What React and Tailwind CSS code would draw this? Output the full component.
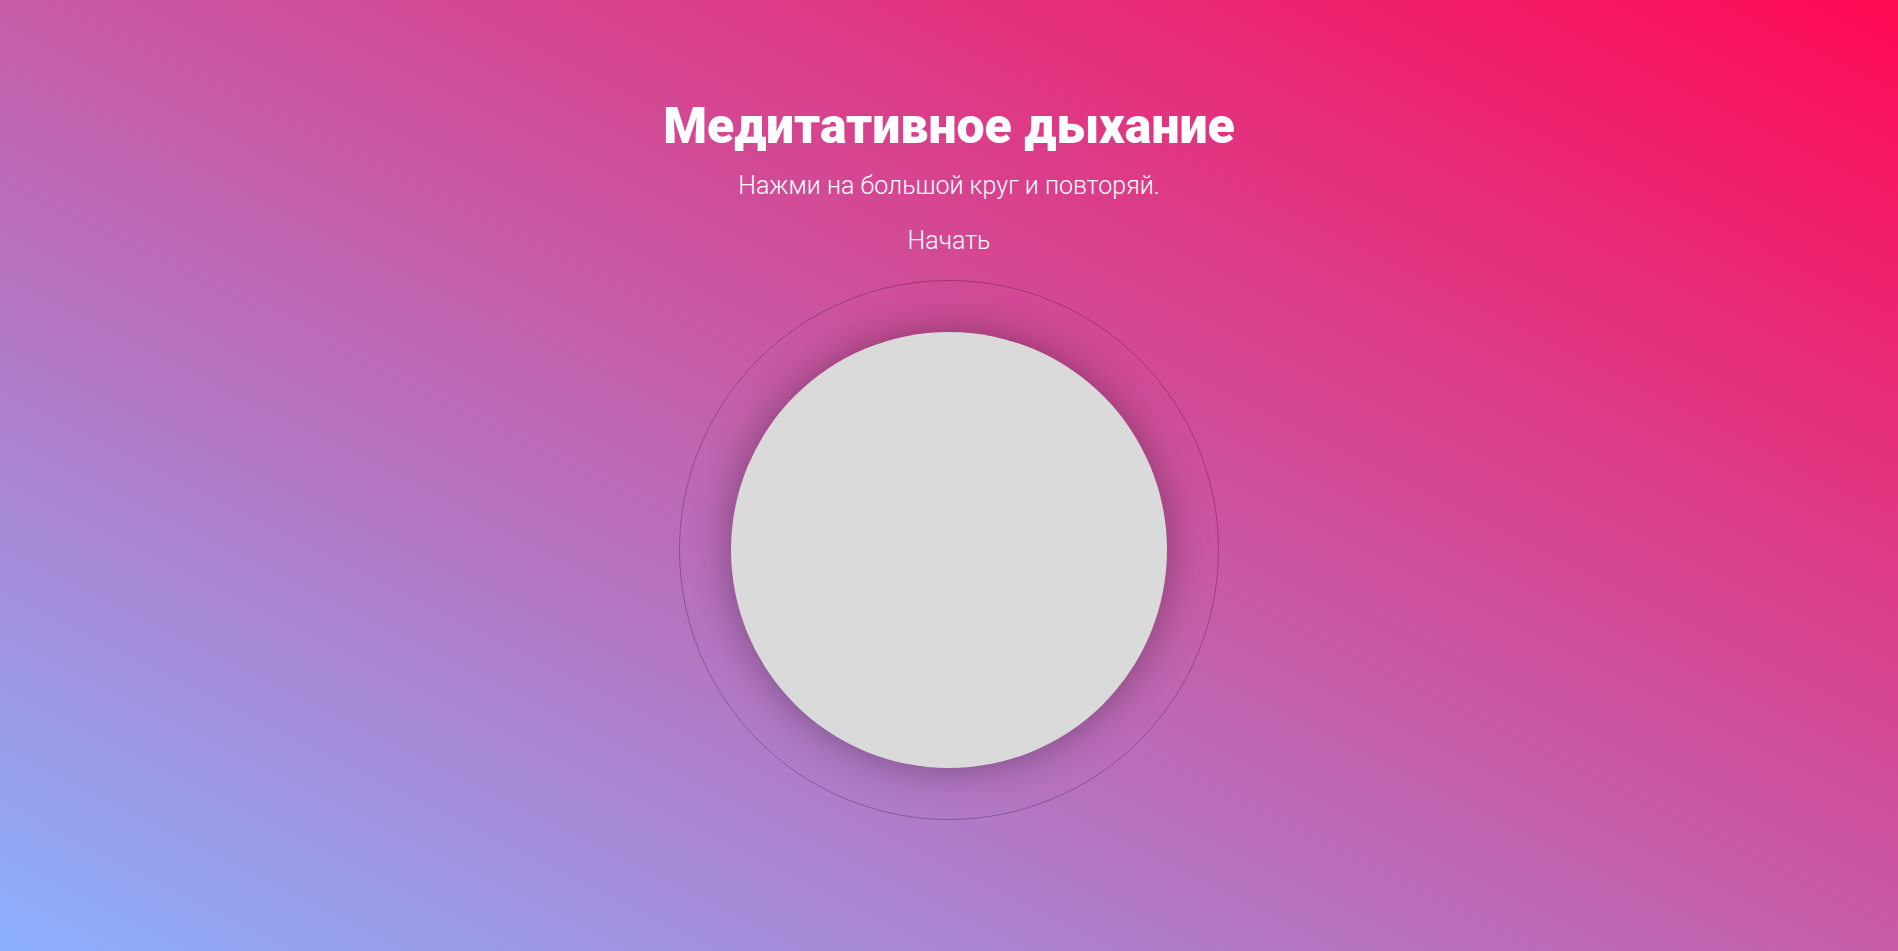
import React from "react";

export default function App() {
  return (
    <div
      className="w-full h-[951px] overflow-hidden flex flex-col items-center bg-[linear-gradient(to_top_right,#8cb0fd,#c65ca8_50%,#ff0954)] text-white pt-[97px]"
      style={{ fontFamily: "Roboto, 'Noto Sans', sans-serif" }}
    >
      <h1 className="text-[50px] leading-[58px] font-black">Медитативное дыхание</h1>
      <p className="mt-[16px] text-[25px] leading-[29px] font-light">Нажми на большой круг и повторяй.</p>
      <button className="mt-[26px] text-[25px] leading-[29px] font-light cursor-pointer">Начать</button>
      <div className="mt-[25px] w-[540px] h-[540px] rounded-full border border-black/25 flex items-center justify-center">
        <div className="w-[436px] h-[436px] rounded-full bg-[#dadada] shadow-[0_0_40px_rgba(0,0,0,0.35)]" />
      </div>
    </div>
  );
}
